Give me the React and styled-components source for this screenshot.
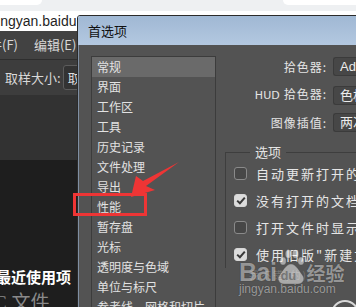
import React from "react";
import styled, { createGlobalStyle } from "styled-components";

const Global = createGlobalStyle`
  html, body { margin: 0; padding: 0; background: #ffffff; }
  * { box-sizing: border-box; }
`;

const CJK = `"Noto Sans CJK SC", "Noto Sans", sans-serif`;

const Root = styled.div`
  position: relative;
  width: 356px;
  height: 307px;
  overflow: hidden;
  font-family: ${CJK};
  display: flex;
  flex-direction: column;
`;

/* ---------- browser chrome ---------- */
const TabStrip = styled.div`
  flex: none;
  height: 11px;
  background: #eef0f2;
  display: flex;
  justify-content: space-between;
  align-items: flex-start;
`;
const TabPiece = styled.div`
  width: ${(p) => p.$w}px;
  height: 5px;
  background: #ffffff;
  border-radius: ${(p) => (p.$side === "left" ? "0 0 6px 0" : "0 0 0 6px")};
`;
const UrlRow = styled.div`
  flex: none;
  height: 20px;
  background: #ffffff;
  font-family: "Liberation Sans", Arial, sans-serif;
  font-size: 14px;
  line-height: 20px;
  color: #1f1f1f;
  white-space: nowrap;
  text-indent: -6px;
  overflow: hidden;
`;

/* ---------- photoshop workspace ---------- */
const Workspace = styled.div`
  flex: 1;
  min-height: 0;
  overflow: hidden;
  display: flex;
  flex-direction: column;
  background: #1e1e1e;
`;
const MenuBar = styled.div`
  flex: none;
  height: 29px;
  background: #424242;
  display: flex;
  align-items: center;
  gap: 16px;
  border-bottom: 1px solid #2e2e2e;
  font-size: 13px;
  color: #d8d8d8;
  white-space: nowrap;
`;
const MenuItem = styled.span`
  margin-left: ${(p) => p.$shift || 0}px;
  line-height: 16px;
`;
const OptionsBar = styled.div`
  flex: none;
  height: 35px;
  background: #3d3d3d;
  display: flex;
  align-items: center;
  gap: 2px;
  padding-left: 5px;
  font-size: 13px;
  color: #d8d8d8;
  white-space: nowrap;
`;
const SmallSelect = styled.div`
  height: 25px;
  width: 40px;
  border: 1px solid #5c5c5c;
  border-radius: 3px;
  background: #333333;
  padding-left: 4px;
  line-height: 23px;
  color: #dddddd;
  overflow: hidden;
`;
const PanelBand = styled.div`
  flex: none;
  height: 65px;
  background: #323232;
`;
const Home = styled.div`
  flex: 1;
  min-height: 0;
  background: #1e1e1e;
  padding-top: 107px;
  white-space: nowrap;
`;
const HomeTitle = styled.div`
  font-size: 15px;
  font-weight: 700;
  color: #ffffff;
  line-height: 20px;
  margin-left: -4px;
`;
const HomeSub = styled.div`
  font-size: 19px;
  color: #8a8a8a;
  line-height: 24px;
  margin-top: 4px;
  margin-left: -6px;
  font-family: "Liberation Serif", ${CJK};
`;

/* ---------- dialog ---------- */
const Dialog = styled.div`
  position: absolute;
  left: 77px;
  top: 15px;
  width: 300px;
  height: 300px;
  border: 1px solid #2a2a2a;
  border-radius: 3px 0 0 0;
  display: flex;
  flex-direction: column;
  overflow: hidden;
`;
const TitleBar = styled.div`
  flex: none;
  height: 29px;
  background: linear-gradient(to bottom, #a0b8d4, #b3c8e0);
  padding-left: 10px;
  font-size: 13px;
  line-height: 29px;
  color: #111111;
`;
const DialogBody = styled.div`
  flex: 1;
  min-height: 0;
  display: flex;
`;
const FrameStrip = styled.div`
  width: 4px;
  background: #bcd1ea;
  border-right: 1px solid #7f8fa3;
`;
const Content = styled.div`
  flex: 1;
  background: #535353;
  display: flex;
  padding: 11px 0 0 12px;
`;
const CategoryList = styled.div`
  flex: none;
  width: 125px;
  border: 1px solid #3c3c3c;
  border-bottom: none;
  display: flex;
  flex-direction: column;
`;
const Category = styled.div`
  flex: none;
  height: 20px;
  line-height: 20px;
  padding-left: 5px;
  font-size: 12px;
  color: #e2e2e2;
  white-space: nowrap;
  background: ${(p) => (p.$selected ? "#6a6a6a" : "transparent")};
`;
const RightCol = styled.div`
  flex: 1;
  min-width: 0;
  display: flex;
  flex-direction: column;
  gap: 10px;
  padding-top: 1px;
`;
const FieldRow = styled.div`
  flex: none;
  display: grid;
  grid-template-columns: 111px 1fr;
  column-gap: 6px;
  height: 18px;
  align-items: center;
`;
const FieldLabel = styled.div`
  text-align: right;
  font-size: 12px;
  letter-spacing: 1px;
  color: #e4e4e4;
  line-height: 18px;
  white-space: nowrap;
`;
const HudLatin = styled.span`
  font-family: "DejaVu Sans", sans-serif;
  letter-spacing: 0;
  font-size: 11px;
  margin-right: 4px;
`;
const Select = styled.div`
  height: 19px;
  border: 1px solid #3b3b3b;
  border-right: none;
  border-radius: 3px 0 0 3px;
  background: #474747;
  padding-left: 6px;
  font-size: 13px;
  line-height: 17px;
  color: #ececec;
  white-space: nowrap;
  font-family: "Liberation Sans", ${CJK};
`;
const Group = styled.fieldset`
  flex: none;
  margin: 3px 0 0 9px;
  padding: 0 0 0 8px;
  border: 1px solid #3e3e3e;
  border-right: none;
  border-bottom: none;
  min-width: 0;
`;
const Legend = styled.legend`
  margin-left: 16px;
  padding: 0 5px;
  font-size: 13px;
  line-height: 16px;
  color: #e4e4e4;
`;
const CheckRow = styled.div`
  height: 27px;
  display: flex;
  align-items: center;
  gap: 9px;
  white-space: nowrap;
`;
const Box = styled.div`
  flex: none;
  width: 13px;
  height: 13px;
  border-radius: 3px;
  border: 1px solid ${(p) => (p.$on ? "#d6d6d6" : "#8a8a8a")};
  background: ${(p) => (p.$on ? "#dcdcdc" : "#474747")};
  display: flex;
  align-items: center;
  justify-content: center;
`;
const CheckText = styled.span`
  font-size: 13px;
  letter-spacing: 2px;
  color: #e6e6e6;
  line-height: 16px;
`;
const Ring = styled.div`
  position: absolute;
  left: 253px;
  top: 284px;
  width: 28px;
  height: 28px;
  border-radius: 50%;
  border: 2px solid #d8d8d8;
`;

/* ---------- annotations ---------- */
const RedBox = styled.div`
  position: absolute;
  left: 73px;
  top: 193px;
  width: 74px;
  height: 23px;
  border: 3px solid #ee3535;
`;
const Overlay = styled.svg`
  position: absolute;
  left: 0;
  top: 0;
  pointer-events: none;
`;
const Watermark = styled.div`
  position: absolute;
  left: 239px;
  top: 248px;
  width: 110px;
  display: flex;
  flex-direction: column;
  color: rgba(255, 255, 255, 0.5);
  pointer-events: none;
`;
const MarkTop = styled.div`
  display: flex;
  align-items: flex-end;
  height: 38px;
`;
const BaiText = styled.span`
  font-family: "Liberation Sans", Arial, sans-serif;
  font-weight: 700;
  font-size: 25px;
  line-height: 28px;
  letter-spacing: -0.5px;
  text-shadow: 0 0 1px rgba(0, 0, 0, 0.5);
`;
const Paw = styled.div`
  position: relative;
  width: 30px;
  height: 38px;
`;
const PawDu = styled.span`
  position: absolute;
  left: 4px;
  bottom: 3px;
  font-family: "Liberation Sans", Arial, sans-serif;
  font-weight: 700;
  font-size: 13px;
  color: rgba(70, 70, 70, 0.55);
`;
const JingYan = styled.span`
  font-size: 19px;
  font-weight: 700;
  line-height: 26px;
  text-shadow: 0 0 1px rgba(0, 0, 0, 0.5);
`;
const MarkSub = styled.div`
  font-size: 10px;
  line-height: 10px;
  margin-left: 10px;
  margin-top: -16px;
  color: rgba(255, 255, 255, 0.22);
  letter-spacing: 2px;
`;
const MarkUrl = styled.div`
  font-family: "Liberation Sans", Arial, sans-serif;
  font-size: 12px;
  line-height: 14px;
  margin-top: 2px;
  text-shadow: 0 0 1px rgba(0, 0, 0, 0.5);
`;

const categories = [
  "常规",
  "界面",
  "工作区",
  "工具",
  "历史记录",
  "文件处理",
  "导出",
  "性能",
  "暂存盘",
  "光标",
  "透明度与色域",
  "单位与标尺",
  "参考线、网格和切片",
  "增效工具",
];

const options = [
  { on: false, text: "自动更新打开的文档" },
  { on: true, text: "没有打开的文档时显示\"开始\"工作区" },
  { on: false, text: "打开文件时显示\"最近打开的文件\"工作区" },
  { on: true, text: "使用旧版\"新建文档\"界面" },
];

const Check = () => (
  <svg width="10" height="9" viewBox="0 0 10 9">
    <path d="M1.2 4.6 L3.9 7.2 L8.8 1.6" fill="none" stroke="#3a3a3a" strokeWidth="2" />
  </svg>
);

export default function App() {
  return (
    <>
      <Global />
      <Root>
        <TabStrip>
          <TabPiece $w={42} $side="left" />
          <TabPiece $w={73} $side="right" />
        </TabStrip>
        <UrlRow>jingyan.baidu.com/article</UrlRow>
        <Workspace>
          <MenuBar>
            <MenuItem $shift={-24}>文件(F)</MenuItem>
            <MenuItem>编辑(E)</MenuItem>
            <MenuItem>图像(I)</MenuItem>
          </MenuBar>
          <OptionsBar>
            <span>取样大小:</span>
            <SmallSelect>取样点</SmallSelect>
          </OptionsBar>
          <PanelBand />
          <Home>
            <HomeTitle>最近使用项</HomeTitle>
            <HomeSub>C 文件</HomeSub>
          </Home>
        </Workspace>

        <Dialog>
          <TitleBar>首选项</TitleBar>
          <DialogBody>
            <FrameStrip />
            <Content>
              <CategoryList>
                {categories.map((c, i) => (
                  <Category key={c} $selected={i === 0}>
                    {c}
                  </Category>
                ))}
              </CategoryList>
              <RightCol>
                <FieldRow>
                  <FieldLabel>拾色器:</FieldLabel>
                  <Select>Adobe</Select>
                </FieldRow>
                <FieldRow>
                  <FieldLabel>
                    <HudLatin>HUD</HudLatin>拾色器:
                  </FieldLabel>
                  <Select>色相条纹</Select>
                </FieldRow>
                <FieldRow>
                  <FieldLabel>图像插值:</FieldLabel>
                  <Select>两次立方</Select>
                </FieldRow>
                <Group>
                  <Legend>选项</Legend>
                  {options.map((o) => (
                    <CheckRow key={o.text}>
                      <Box $on={o.on}>{o.on && <Check />}</Box>
                      <CheckText>{o.text}</CheckText>
                    </CheckRow>
                  ))}
                </Group>
              </RightCol>
            </Content>
          </DialogBody>
          <Ring />
        </Dialog>

        <RedBox />
        <Overlay width="356" height="307" viewBox="0 0 356 307">
          <polygon
            points="131,197 136,176 143,181 179,162 146,186 155,190"
            fill="#ee3535"
          />
        </Overlay>

        <Watermark>
          <MarkTop>
            <BaiText>Bai</BaiText>
            <Paw>
              <svg width="30" height="38" viewBox="0 0 30 38">
                <g fill="rgba(255,255,255,0.5)" stroke="rgba(60,60,60,0.35)" strokeWidth="0.8">
                  <ellipse cx="7" cy="13" rx="3.2" ry="4" />
                  <ellipse cx="12.5" cy="6" rx="3.2" ry="4.2" />
                  <ellipse cx="19.5" cy="6" rx="3.2" ry="4.2" />
                  <ellipse cx="25" cy="13" rx="3.2" ry="4" />
                  <path d="M15 16 C10 16 6 24 3 28 C1 31 3 36 8 36 L22 36 C27 36 29 31 27 28 C24 24 20 16 15 16 Z" />
                </g>
              </svg>
              <PawDu>du</PawDu>
            </Paw>
            <JingYan>经验</JingYan>
          </MarkTop>
          <MarkSub>我不错(的)</MarkSub>
          <MarkUrl>jingyan.baidu.com</MarkUrl>
        </Watermark>
      </Root>
    </>
  );
}
